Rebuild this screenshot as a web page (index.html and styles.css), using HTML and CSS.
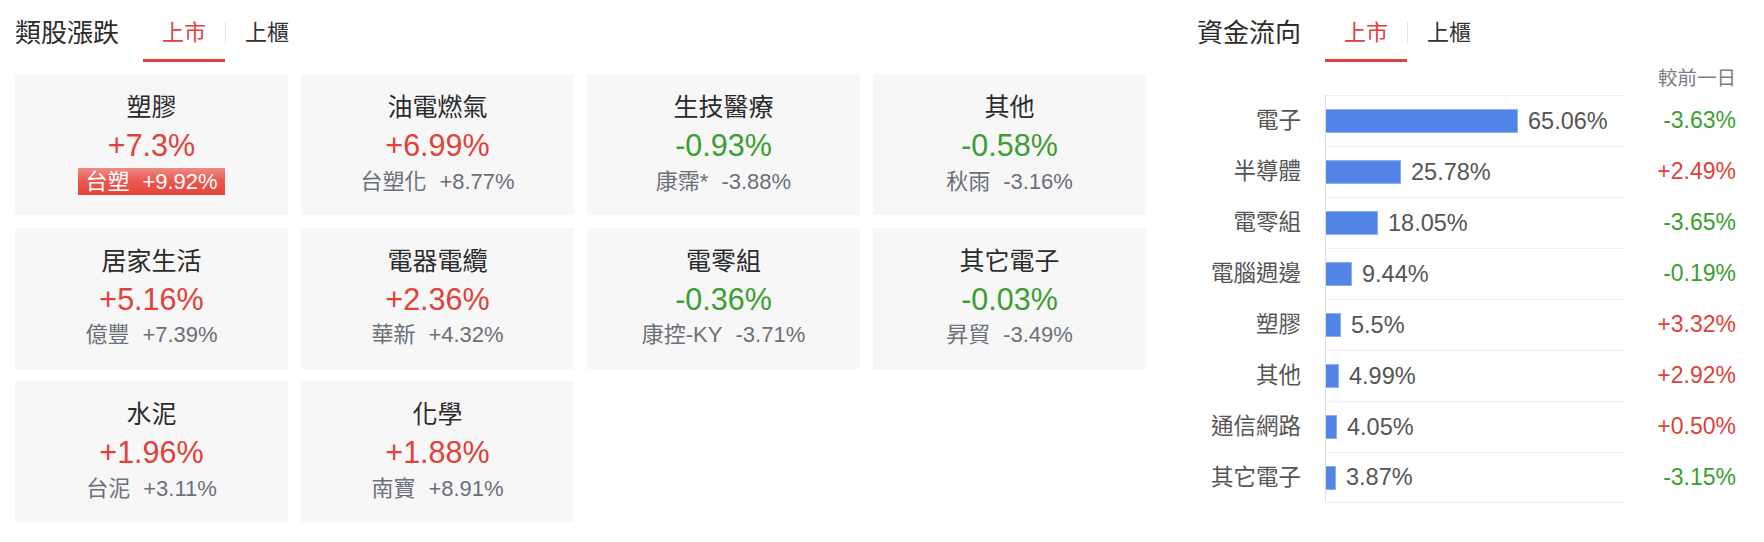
FILE: index.html
```html
<!DOCTYPE html>
<html lang="zh-Hant">
<head>
<meta charset="utf-8">
<title>類股漲跌</title>
<link rel="stylesheet" href="styles.css">
</head>
<body>
<div class="page">
  <section class="sectors">
    <div class="head">
      <div class="title">類股漲跌</div>
      <div class="tabs">
        <div class="tab active">上市</div>
        <span class="sep"></span>
        <div class="tab">上櫃</div>
      </div>
    </div>
    <div class="grid">
      <div class="card">
        <div class="name">塑膠</div>
        <div class="pct up">+7.3%</div>
        <div class="sub"><span class="badge"><span class="stock">台塑</span><span>+9.92%</span></span></div>
      </div>
      <div class="card">
        <div class="name">油電燃氣</div>
        <div class="pct up">+6.99%</div>
        <div class="sub"><span class="stock">台塑化</span><span>+8.77%</span></div>
      </div>
      <div class="card">
        <div class="name">生技醫療</div>
        <div class="pct down">-0.93%</div>
        <div class="sub"><span class="stock">康霈*</span><span>-3.88%</span></div>
      </div>
      <div class="card">
        <div class="name">其他</div>
        <div class="pct down">-0.58%</div>
        <div class="sub"><span class="stock">秋雨</span><span>-3.16%</span></div>
      </div>
      <div class="card">
        <div class="name">居家生活</div>
        <div class="pct up">+5.16%</div>
        <div class="sub"><span class="stock">億豐</span><span>+7.39%</span></div>
      </div>
      <div class="card">
        <div class="name">電器電纜</div>
        <div class="pct up">+2.36%</div>
        <div class="sub"><span class="stock">華新</span><span>+4.32%</span></div>
      </div>
      <div class="card">
        <div class="name">電零組</div>
        <div class="pct down">-0.36%</div>
        <div class="sub"><span class="stock">康控-KY</span><span>-3.71%</span></div>
      </div>
      <div class="card">
        <div class="name">其它電子</div>
        <div class="pct down">-0.03%</div>
        <div class="sub"><span class="stock">昇貿</span><span>-3.49%</span></div>
      </div>
      <div class="card">
        <div class="name">水泥</div>
        <div class="pct up">+1.96%</div>
        <div class="sub"><span class="stock">台泥</span><span>+3.11%</span></div>
      </div>
      <div class="card">
        <div class="name">化學</div>
        <div class="pct up">+1.88%</div>
        <div class="sub"><span class="stock">南寶</span><span>+8.91%</span></div>
      </div>
    </div>
  </section>

  <section class="flow">
    <div class="head">
      <div class="title">資金流向</div>
      <div class="tabs">
        <div class="tab active">上市</div>
        <span class="sep"></span>
        <div class="tab">上櫃</div>
      </div>
    </div>
    <div class="compare">較前一日</div>
    <div class="chart">
      <div class="row">
        <div class="label">電子</div>
        <div class="cell"><span class="bar" style="width:192px"></span><span class="val">65.06%</span></div>
        <div class="delta down">-3.63%</div>
      </div>
      <div class="row">
        <div class="label">半導體</div>
        <div class="cell"><span class="bar" style="width:75px"></span><span class="val">25.78%</span></div>
        <div class="delta up">+2.49%</div>
      </div>
      <div class="row">
        <div class="label">電零組</div>
        <div class="cell"><span class="bar" style="width:52px"></span><span class="val">18.05%</span></div>
        <div class="delta down">-3.65%</div>
      </div>
      <div class="row">
        <div class="label">電腦週邊</div>
        <div class="cell"><span class="bar" style="width:26px"></span><span class="val">9.44%</span></div>
        <div class="delta down">-0.19%</div>
      </div>
      <div class="row">
        <div class="label">塑膠</div>
        <div class="cell"><span class="bar" style="width:15px"></span><span class="val">5.5%</span></div>
        <div class="delta up">+3.32%</div>
      </div>
      <div class="row">
        <div class="label">其他</div>
        <div class="cell"><span class="bar" style="width:13px"></span><span class="val">4.99%</span></div>
        <div class="delta up">+2.92%</div>
      </div>
      <div class="row">
        <div class="label">通信網路</div>
        <div class="cell"><span class="bar" style="width:11px"></span><span class="val">4.05%</span></div>
        <div class="delta up">+0.50%</div>
      </div>
      <div class="row last">
        <div class="label">其它電子</div>
        <div class="cell"><span class="bar" style="width:10px"></span><span class="val">3.87%</span></div>
        <div class="delta down">-3.15%</div>
      </div>
    </div>
  </section>
</div>
</body>
</html>
```

FILE: styles.css
```css
* { box-sizing: border-box; }

html, body {
  margin: 0;
  padding: 0;
  background: #ffffff;
}

body {
  font-family: "Liberation Sans", "Noto Sans CJK TC", sans-serif;
  color: #333333;
  width: 1764px;
  height: 542px;
  overflow: hidden;
}

.page {
  display: flex;
  align-items: flex-start;
}

.sectors {
  width: 1146px;
  padding-left: 15px;
}

.flow {
  width: 539px;
  margin-left: 51px;
}

/* header with tabs */
.head {
  display: flex;
  align-items: flex-start;
  height: 62px;
}

.title {
  margin-top: 14px;
  font-size: 26px;
  line-height: 38px;
  color: #2b2b2b;
  white-space: nowrap;
}

.tabs {
  display: flex;
  align-items: flex-start;
  margin-left: 24px;
}

.tab {
  height: 62px;
  padding: 14px 19px 7px;
  font-size: 22px;
  line-height: 38px;
  color: #333333;
  border-bottom: 3px solid transparent;
  white-space: nowrap;
}

.tab.active {
  color: #e0413a;
  border-bottom-color: #e0413a;
}

.sep {
  width: 1px;
  height: 21px;
  margin-top: 22px;
  background: #e3e3e3;
}

/* sector cards */
.grid {
  margin-top: 12px;
  display: grid;
  grid-template-columns: repeat(4, 273px);
  grid-auto-rows: 141px;
  column-gap: 13px;
  row-gap: 12.5px;
}

.card {
  background: #f7f7f7;
  padding-top: 15px;
  display: flex;
  flex-direction: column;
  align-items: center;
}

.name {
  font-size: 25px;
  line-height: 36px;
  color: #2b2b2b;
}

.pct {
  font-size: 30.5px;
  line-height: 40px;
}

.up { color: #e0413a; }
.down { color: #3a9f2e; }

.sub {
  height: 32px;
  display: flex;
  align-items: center;
  font-size: 22px;
  line-height: 27px;
  color: #6b7079;
  white-space: nowrap;
}

.stock {
  margin-right: 13px;
}

.badge {
  display: flex;
  align-items: center;
  height: 27px;
  padding: 0 7px;
  color: #ffffff;
  background: linear-gradient(to bottom, #f08a86 0%, #ea5a52 45%, #e5443b 100%);
}

/* fund flow chart */
.compare {
  height: 33px;
  font-size: 19.5px;
  line-height: 33px;
  text-align: right;
  color: #7a7d84;
}

.row {
  display: flex;
  height: 51px;
}

.label {
  width: 104px;
  font-size: 22.5px;
  line-height: 51px;
  text-align: right;
  color: #555555;
  white-space: nowrap;
}

.cell {
  width: 299px;
  margin-left: 24px;
  border-left: 1px solid #dddddd;
  border-top: 1px solid #eeeeee;
  display: flex;
  align-items: center;
}

.row.last .cell {
  border-bottom: 1px solid #eeeeee;
}

.bar {
  display: block;
  height: 24px;
  background: #5384e8;
  border: 1px solid #8eaef0;
  border-left: none;
}

.val {
  margin-left: 10px;
  font-size: 23.5px;
  color: #555555;
}

.delta {
  flex: 1;
  font-size: 23px;
  line-height: 51px;
  text-align: right;
}
```
